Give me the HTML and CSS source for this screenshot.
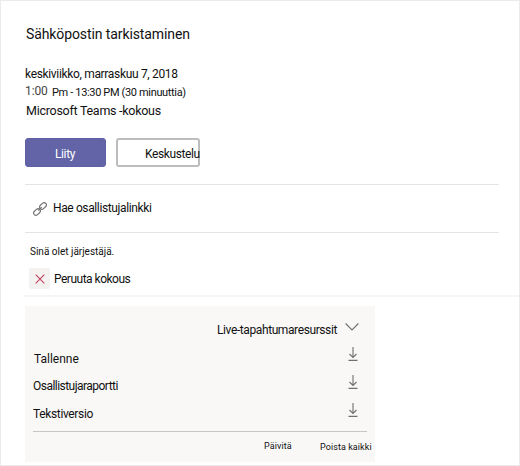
FILE: index.html
```html
<!DOCTYPE html>
<html lang="fi">
<head>
  <meta charset="UTF-8" />
  <title>Sähköpostin tarkistaminen</title>
  <link rel="stylesheet" href="styles.css">
</head>
<body>
  <main class="meeting">
    <h1 class="title">Sähköpostin tarkistaminen</h1>
    <p class="date">keskiviikko, marraskuu 7, 2018</p>
    <p class="time"><span class="start">1:00</span><span class="range">Pm - 13:30 PM (30 minuuttia)</span></p>
    <p class="place">Microsoft Teams -kokous</p>

    <div class="actions">
      <button class="btn join">Liity</button>
      <button class="btn chat">Keskustelu</button>
    </div>

    <div class="link-row">
      <svg class="link-icon" width="14" height="14" viewBox="0 0 14 14">
        <rect x="-3.7" y="-2.3" width="7.4" height="4.6" rx="2.3" transform="translate(10 4) rotate(-43)" />
        <rect x="-3.7" y="-2.3" width="7.4" height="4.6" rx="2.3" transform="translate(4 10) rotate(-43)" />
        <path d="M5.2 8.7L8.7 5.2" />
      </svg>
      <span class="link-text">Hae osallistujalinkki</span>
    </div>

    <div class="organizer">
      <p class="organizer-text">Sinä olet järjestäjä.</p>
      <div class="cancel-row">
        <span class="cancel-box">
          <svg width="10" height="10" viewBox="0 0 10 10"><path d="M.7.7l8.6 8.6M9.3.7L.7 9.3" /></svg>
        </span>
        <span class="cancel-text">Peruuta kokous</span>
      </div>
    </div>

    <section class="resources">
      <div class="resources-head">
        <span class="resources-title">Live-tapahtumaresurssit</span>
        <svg width="14" height="9" viewBox="0 0 14 9"><path d="M.6 .5L7 7 13.4 .5" /></svg>
      </div>
      <div class="file">
        <span class="file-name recording">Tallenne</span>
        <svg width="10" height="14" viewBox="0 0 10 14"><path d="M5 0v10.5M1.5 7L5 10.5 8.5 7M.5 13.4h9" /></svg>
      </div>
      <div class="file">
        <span class="file-name report">Osallistujaraportti</span>
        <svg width="10" height="14" viewBox="0 0 10 14"><path d="M5 0v10.5M1.5 7L5 10.5 8.5 7M.5 13.4h9" /></svg>
      </div>
      <div class="file">
        <span class="file-name transcript">Tekstiversio</span>
        <svg width="10" height="14" viewBox="0 0 10 14"><path d="M5 0v10.5M1.5 7L5 10.5 8.5 7M.5 13.4h9" /></svg>
      </div>
      <div class="resources-foot">
        <span class="refresh">Päivitä</span>
        <span class="remove">Poista kaikki</span>
      </div>
    </section>
  </main>
</body>
</html>
```
FILE: styles.css
```css
* { box-sizing: border-box; }
body { margin: 0; font-family: Roboto, "Liberation Sans", sans-serif; font-size: 12px; color: #111; background: #fff; }
h1, p { margin: 0; font-weight: 400; white-space: nowrap; }
span { flex: none; white-space: nowrap; }
svg { display: block; flex: none; fill: none; stroke: #707070; stroke-width: 1.1; }

.meeting { width: 520px; height: 466px; padding-left: 24px; border: 1px solid #ebebeb; overflow: hidden; }

.title { height: 20px; margin: 23px 0 0 1px; font-size: 14px; line-height: 20px; letter-spacing: -0.1px; }
.date { height: 18px; margin-top: 21px; line-height: 18px; letter-spacing: -0.33px; }
.time { display: flex; height: 18px; line-height: 17px; }
.start { width: 27px; color: #444; letter-spacing: -0.1px; }
.range { font-size: 11px; line-height: 19px; letter-spacing: -0.35px; }
.place { height: 20px; padding-left: 1px; font-size: 12.5px; line-height: 20px; letter-spacing: -0.27px; }

.actions { display: flex; gap: 10px; margin-top: 17px; }
.btn { height: 29px; padding: 2px 0 0; font: inherit; text-align: left; letter-spacing: -0.38px; border-radius: 3px; white-space: nowrap; }
.join { width: 81px; padding-left: 29px; border: 1px solid #5f61a6; background: #6264a7; color: #fff; }
.chat { width: 84px; padding-left: 27px; border: 2px solid #bdbdbd; background: #fff; color: #111; }

.link-row { display: flex; align-items: center; width: 474px; height: 49px; margin-top: 17px; padding-left: 8px; border-top: 1px solid #e4e4e4; border-bottom: 1px solid #e4e4e4; }
.link-text { margin: -2px 0 0 6px; letter-spacing: -0.38px; }

.organizer { height: 64px; margin-left: -1px; border-bottom: 2px solid #f5f5f5; }
.organizer-text { height: 18px; padding: 10px 0 0 6px; font-size: 10px; line-height: 18px; }
.cancel-row { display: flex; align-items: center; height: 21px; margin-top: 17px; padding-left: 5px; }
.cancel-box { display: flex; align-items: center; justify-content: center; width: 21px; height: 21px; border-radius: 2px; background: #f3f2f1; }
.cancel-box svg { stroke: #c4405f; }
.cancel-text { margin-left: 4px; letter-spacing: -0.5px; }

.resources { width: 350px; height: 156px; margin-top: 9px; padding: 8px 8px 0; background: #f9f8f7; }
.resources-head { display: flex; justify-content: flex-end; height: 28px; padding: 9px 8px 0 0; }
.resources-title { width: 128px; line-height: 14px; letter-spacing: -0.4px; }
.file { display: flex; justify-content: space-between; height: 28px; padding: 5px 9px 0 0; }
.file-name { padding-top: 5px; line-height: 14px; }
.recording { padding-left: 1px; }
.report { padding-top: 4px; letter-spacing: -0.53px; }
.transcript { padding-top: 4px; letter-spacing: -0.35px; }
.resources-foot { display: flex; height: 32px; margin-top: 5px; padding: 8px 0 0 231px; border-top: 1px solid #c6c6c6; font-size: 9px; line-height: 12px; }
.refresh { width: 56px; letter-spacing: 0.1px; }
.remove { padding-top: 1px; letter-spacing: 0.08px; }
```
